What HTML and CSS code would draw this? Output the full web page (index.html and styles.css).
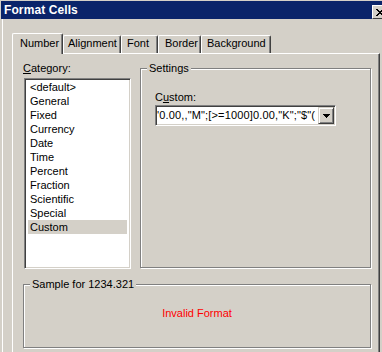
FILE: index.html
```html
<!DOCTYPE html>
<html>
<head>
<meta charset="utf-8">
<link rel="stylesheet" href="styles.css">
</head>
<body>
<div class="window">
  <div class="titlebar">
    <span class="title">Format Cells</span>
    <span class="close">
      <svg width="8" height="7" viewBox="0 0 8 7"><path d="M0 0h2v1H0zM6 0h2v1H6zM1 1h2v1H1zM5 1h2v1H5zM2 2h4v1H2zM3 3h2v1H3zM2 4h4v1H2zM1 5h2v1H1zM5 5h2v1H5zM0 6h2v1H0zM6 6h2v1H6z" fill="#000"/></svg>
    </span>
  </div>
  <div class="client">
    <div class="tabs">
      <div class="tab active tab-number">Number</div>
      <div class="tab tab-alignment">Alignment</div>
      <div class="tab tab-font">Font</div>
      <div class="tab tab-border">Border</div>
      <div class="tab tab-background">Background</div>
    </div>
    <div class="panel">
      <div class="row">
        <div class="cat">
          <div class="label"><u>C</u>ategory:</div>
          <ul class="list">
            <li>&lt;default&gt;</li>
            <li>General</li>
            <li>Fixed</li>
            <li>Currency</li>
            <li>Date</li>
            <li>Time</li>
            <li>Percent</li>
            <li>Fraction</li>
            <li>Scientific</li>
            <li>Special</li>
            <li class="selected">Custom</li>
          </ul>
        </div>
        <div class="group settings">
          <span class="legend">Settings</span>
          <div class="label">C<u>u</u>stom:</div>
          <div class="combo">
            <span class="combo-text">'0.00,,"M";[&gt;=1000]0.00,"K";"$"(</span>
            <span class="combo-btn">
              <svg width="7" height="4" viewBox="0 0 7 4"><path d="M0 0h7v1H0zM1 1h5v1H1zM2 2h3v1H2zM3 3h1v1H3z" fill="#000"/></svg>
            </span>
          </div>
        </div>
      </div>
      <div class="group sample">
        <span class="legend">Sample for 1234.321</span>
        <div class="invalid">Invalid Format</div>
      </div>
    </div>
  </div>
</div>
</body>
</html>
```

FILE: styles.css
```css
html, body {
  margin: 0;
  padding: 0;
  overflow: hidden;
  background: #d4d0c8;
}

body {
  font-family: "Liberation Sans", Arial, sans-serif;
  font-size: 11px;
  line-height: 13px;
  color: #000;
}

.window {
  width: 392px;
  height: 352px;
  border-top: 1px solid #d4d0c8;
  box-sizing: border-box;
}

.titlebar {
  height: 18px;
  margin-left: 1px;
  background: #0a246a;
  display: flex;
  justify-content: space-between;
  align-items: flex-start;
}

.title {
  color: #fff;
  font-weight: bold;
  font-size: 12px;
  line-height: 18px;
  padding-left: 3px;
  letter-spacing: 0.1px;
}

.close {
  width: 16px;
  height: 14px;
  margin-top: 4px;
  margin-right: 4px;
  box-sizing: border-box;
  background: #d4d0c8;
  border-top: 1px solid #fff;
  border-left: 1px solid #fff;
  border-right: 1px solid #404040;
  border-bottom: 1px solid #404040;
  display: flex;
  align-items: center;
  justify-content: center;
}

.close svg {
  display: block;
}

.client {
  margin-left: 2px;
  border-left: 1px solid #fff;
  padding-top: 14px;
  height: 320px;
}

.tabs {
  display: flex;
  align-items: flex-end;
  padding-left: 9px;
  height: 20px;
}

.tab {
  box-sizing: border-box;
  height: 18px;
  padding-top: 1px;
  background: #d4d0c8;
  border-top: 1px solid #fff;
  border-left: 1px solid #fff;
  border-right: 1px solid #404040;
  border-top-left-radius: 2px;
  border-top-right-radius: 2px;
  box-shadow: inset -1px 0 0 #808080;
  white-space: nowrap;
}

.tab.active {
  height: 21px;
  padding-top: 3px;
  margin-bottom: -1px;
  position: relative;
  z-index: 1;
}

.tab-number { width: 51px; padding-left: 7px; }
.tab-alignment { width: 58px; padding-left: 4px; }
.tab-font { width: 37px; padding-left: 5px; }
.tab-border { width: 43px; padding-left: 6px; }
.tab-background { width: 70px; padding-left: 5px; }

.panel {
  margin-left: 9px;
  width: 368px;
  height: 300px;
  box-sizing: border-box;
  border-top: 1px solid #fff;
  border-left: 1px solid #fff;
  border-right: 1px solid #404040;
  box-shadow: inset -1px 0 0 #808080;
  padding: 8px 0 0 10px;
}

.row {
  display: flex;
  align-items: flex-start;
}

.cat {
  width: 108px;
}

.label {
  line-height: 13px;
}

.list {
  list-style: none;
  margin: 3px 0 0 1px;
  width: 107px;
  height: 191px;
  box-sizing: border-box;
  background: #fff;
  border: 1px solid;
  border-color: #808080 #fff #fff #808080;
  box-shadow: inset 1px 1px 0 #404040, inset -1px -1px 0 #d4d0c8;
  padding: 1px 3px;
}

.list li {
  height: 14px;
  line-height: 14px;
  padding-left: 2px;
  white-space: nowrap;
}

.list li.selected {
  background: #d4d0c8;
}

.group {
  position: relative;
  box-sizing: border-box;
  border: 1px solid #808080;
  box-shadow: inset 1px 1px 0 #fff, 1px 1px 0 #fff;
}

.legend {
  position: absolute;
  top: -7px;
  left: 6px;
  padding: 0 2px;
  background: #d4d0c8;
  line-height: 13px;
  white-space: nowrap;
}

.settings {
  margin-left: 9px;
  margin-top: 6px;
  width: 231px;
  height: 200px;
  padding: 22px 0 0 14px;
}

.combo {
  margin-top: 1px;
  width: 181px;
  height: 21px;
  box-sizing: border-box;
  display: flex;
  background: #fff;
  border: 1px solid;
  border-color: #808080 #fff #fff #808080;
  box-shadow: inset 1px 1px 0 #404040, inset -1px -1px 0 #d4d0c8;
  padding: 1px;
}

.combo-text {
  flex: 1;
  overflow: hidden;
  white-space: nowrap;
  line-height: 17px;
  letter-spacing: 0.15px;
}

.combo-btn {
  width: 16px;
  height: 17px;
  box-sizing: border-box;
  background: #d4d0c8;
  border-top: 1px solid #d4d0c8;
  border-left: 1px solid #d4d0c8;
  border-right: 1px solid #404040;
  border-bottom: 1px solid #404040;
  box-shadow: inset 1px 1px 0 #fff, inset -1px -1px 0 #808080;
  display: flex;
  align-items: center;
  justify-content: center;
}

.combo-btn svg {
  display: block;
}

.sample {
  margin-top: 15px;
  width: 348px;
  height: 64px;
  padding-top: 22px;
}

.invalid {
  color: #f00;
  text-align: center;
  line-height: 13px;
}
```
